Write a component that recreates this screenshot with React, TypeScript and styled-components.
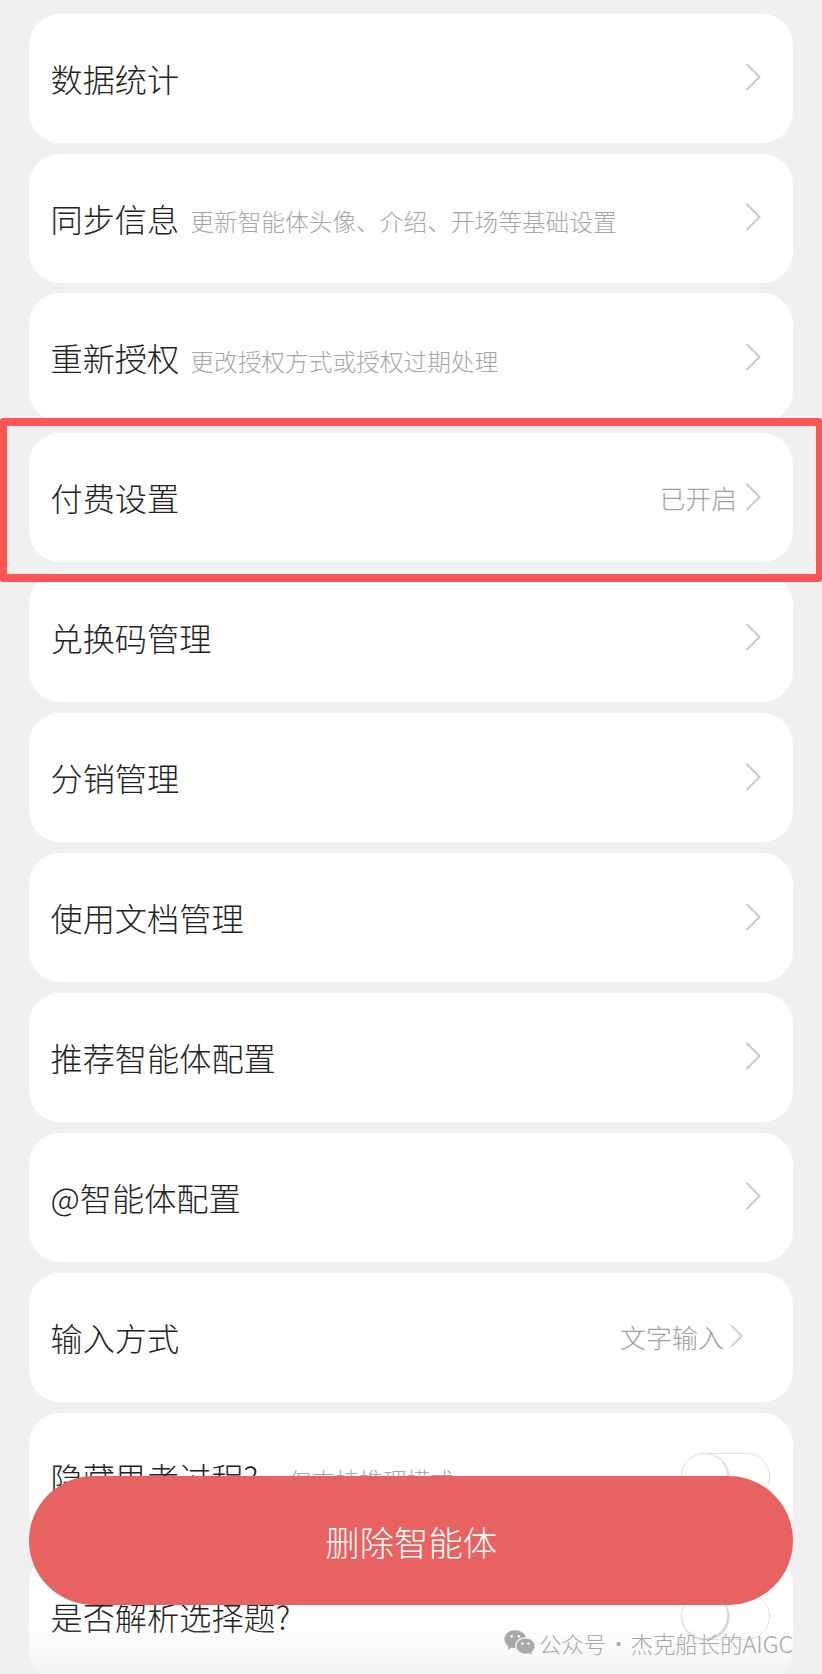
import styled, { createGlobalStyle } from "styled-components";
import { RiWechatFill } from "react-icons/ri";

const GlobalStyle = createGlobalStyle`
  html, body {
    margin: 0;
    padding: 0;
    background: #f0f0f0;
  }
  body {
    font-family: "Noto Sans CJK SC", "Liberation Sans", sans-serif;
  }
`;

const Screen = styled.div`
  position: relative;
  width: 822px;
  height: 1674px;
  overflow: hidden;
  background: #f0f0f0;
`;

const CardList = styled.div`
  display: flex;
  flex-direction: column;
  gap: 10.9px;
  padding: 13.7px 29.5px 0 29px;
`;

const Card = styled.div`
  display: flex;
  align-items: center;
  flex-shrink: 0;
  height: 129px;
  padding: 0 31.5px 0 21.5px;
  background: #fff;
  border-radius: 31px;
`;

const Label = styled.span`
  margin-top: -1px;
  font-size: 32.2px;
  line-height: 40px;
  font-weight: 300;
  color: #222;
  white-space: nowrap;
`;

const Hint = styled.span<{ $gap: number }>`
  margin: 6px 0 0 ${(p) => p.$gap}px;
  font-size: 23.7px;
  line-height: 32px;
  font-weight: 300;
  color: #a6a6a6;
  white-space: nowrap;
`;

const Spacer = styled.div`
  flex: 1;
`;

const Value = styled.span<{ $size: number; $gap: number }>`
  margin-right: ${(p) => p.$gap}px;
  font-size: ${(p) => p.$size}px;
  line-height: 32px;
  font-weight: 300;
  color: #a0a0a0;
  white-space: nowrap;
`;

const Chevron = styled.svg<{ $small?: boolean }>`
  flex-shrink: 0;
  width: ${(p) => (p.$small ? 13 : 16)}px;
  height: ${(p) => (p.$small ? 24 : 28)}px;
  margin-right: ${(p) => (p.$small ? 18 : 0)}px;
  margin-top: -2px;
  fill: none;
  stroke: #c8c8c8;
  stroke-width: 2;
`;

const Toggle = styled.div`
  position: relative;
  box-sizing: border-box;
  flex-shrink: 0;
  width: 89px;
  height: 47px;
  margin-right: -9px;
  margin-top: -1px;
  background: #fff;
  border: 1.5px solid #e0e0e0;
  border-radius: 24px;
`;

const Knob = styled.div`
  position: absolute;
  left: -1.5px;
  top: -1.5px;
  width: 47px;
  height: 47px;
  box-sizing: border-box;
  background: #fff;
  border: 1px solid #e4e4e4;
  border-radius: 50%;
  box-shadow: 1px 1px 2px rgba(0, 0, 0, 0.25);
`;

const HighlightFrame = styled.div`
  position: absolute;
  left: 0;
  top: 418px;
  box-sizing: border-box;
  width: 822px;
  height: 164px;
  border: solid #ff5454;
  border-width: 8px 6px 8px 7px;
  border-radius: 3px;
  pointer-events: none;
`;

const BottomFade = styled.div`
  position: absolute;
  left: 0;
  right: 0;
  bottom: 0;
  height: 50px;
  background: linear-gradient(to bottom, rgba(240, 240, 240, 0), rgba(240, 240, 240, 0.75));
  pointer-events: none;
`;

const DeleteButton = styled.button`
  position: absolute;
  left: 29px;
  top: 1476px;
  width: 763.5px;
  height: 129px;
  padding: 0 0 0 1px;
  border: none;
  border-radius: 65px;
  background: #e86262;
  color: #fff;
  font-family: inherit;
  font-size: 34.4px;
  font-weight: 300;
`;

const Watermark = styled.div`
  position: absolute;
  left: 503px;
  top: 1626px;
  display: flex;
  align-items: center;
  gap: 3px;
  color: #a8a8a8;
  font-size: 22.4px;
  line-height: 32px;
  font-weight: 300;
  white-space: nowrap;
`;

const Dot = styled.span`
  margin: 0 1px;
`;

const Brand = styled.span`
  font-size: 23.5px;
`;

type Row = {
  label: string;
  hint?: string;
  hintGap?: number;
  value?: string;
  valueSize?: number;
  small?: boolean;
  toggle?: boolean;
};

const rows: Row[] = [
  { label: "数据统计" },
  { label: "同步信息", hint: "更新智能体头像、介绍、开场等基础设置" },
  { label: "重新授权", hint: "更改授权方式或授权过期处理" },
  { label: "付费设置", value: "已开启", valueSize: 25.8 },
  { label: "兑换码管理" },
  { label: "分销管理" },
  { label: "使用文档管理" },
  { label: "推荐智能体配置" },
  { label: "@智能体配置" },
  { label: "输入方式", value: "文字输入", valueSize: 26, small: true },
  { label: "隐藏思考过程?", hint: "仅支持推理模式", hintGap: 30, toggle: true },
  { label: "是否解析选择题?", toggle: true },
];

export default function App() {
  return (
    <Screen>
      <GlobalStyle />
      <CardList>
        {rows.map((row) => (
          <Card key={row.label}>
            <Label>{row.label}</Label>
            {row.hint && <Hint $gap={row.hintGap ?? 11}>{row.hint}</Hint>}
            <Spacer />
            {row.value && (
              <Value $size={row.valueSize ?? 24} $gap={row.small ? 6 : 8}>
                {row.value}
              </Value>
            )}
            {row.toggle ? (
              <Toggle>
                <Knob />
              </Toggle>
            ) : (
              <Chevron $small={row.small} viewBox="0 0 16 28">
                <path d="M1.5 1 L14.5 14 L1.5 27" />
              </Chevron>
            )}
          </Card>
        ))}
      </CardList>
      <BottomFade />
      <HighlightFrame />
      <DeleteButton>删除智能体</DeleteButton>
      <Watermark>
        <RiWechatFill size={33} />
        <span>
          公众号<Dot>·</Dot>杰克船长的<Brand>AIGC</Brand>
        </span>
      </Watermark>
    </Screen>
  );
}
